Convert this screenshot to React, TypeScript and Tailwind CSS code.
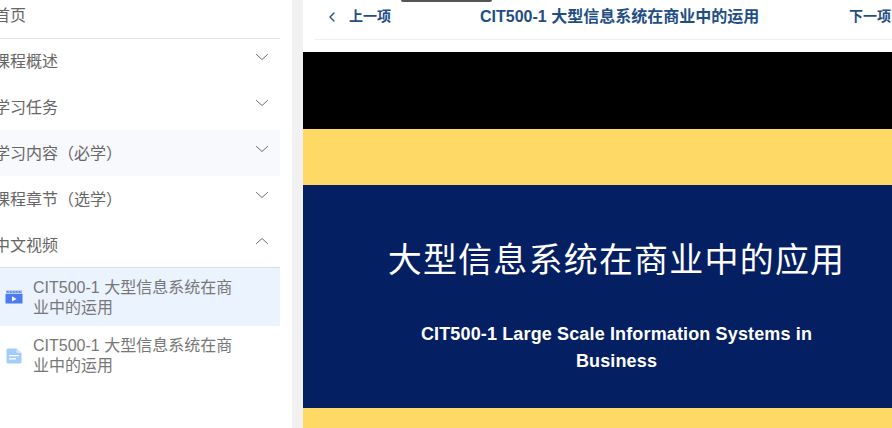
import { ChevronDown, ChevronLeft, ChevronUp } from 'lucide-react';

const FONT = "font-['Liberation_Sans','Noto_Sans_CJK_SC',sans-serif]";

const sections = [
  { title: '课程概述', open: false, hover: false },
  { title: '学习任务', open: false, hover: false },
  { title: '学习内容（必学）', open: false, hover: true },
  { title: '课程章节（选学）', open: false, hover: false },
  { title: '中文视频', open: true, hover: false },
];

const VideoIcon = () => (
  <svg width="18" height="14" viewBox="0 0 18 14" className="shrink-0">
    <path d="M1 0.5h16v3H1z" fill="#8fb0f5" />
    <path d="M2 1l1.5 2M5 1l1.5 2M8 1l1.5 2M11 1l1.5 2M14 1l1.5 2" stroke="#3f70ea" strokeWidth="0.8" />
    <rect x="0.5" y="4" width="17" height="9.5" fill="#4b7bef" />
    <path d="M7 6.2l4.5 2.7L7 11.5z" fill="#fff" />
  </svg>
);

const DocIcon = () => (
  <svg width="16" height="16" viewBox="0 0 16 16" className="shrink-0 mt-[1px]">
    <path d="M2 0.5h8.5L15.5 5v9a1.5 1.5 0 0 1-1.5 1.5H2A1.5 1.5 0 0 1 0.5 14V2A1.5 1.5 0 0 1 2 0.5z" fill="#a3cbfb" />
    <path d="M10.5 0.5L15.5 5h-5z" fill="#d3e6fd" />
    <rect x="3" y="7" width="10" height="1.3" fill="#fff" />
    <rect x="3" y="10.2" width="7" height="1.3" fill="#fff" />
  </svg>
);

const Sidebar = () => (
  <aside className="w-[280px] shrink-0 overflow-hidden text-[#666]">
    <div className="h-[39px] -mb-[1px] border-b border-[#e3e3e3] flex items-center text-[16px] leading-none pb-[7px]">
      <span className="-ml-[6px]">首页</span>
    </div>
    {sections.map((s) => (
      <div
        key={s.title}
        className={`h-[46px] flex justify-between pr-[8px] ${s.hover ? 'bg-[#f8f9fd]' : ''} ${s.open ? 'border-b border-[#dcdcdc]' : ''}`}
      >
        <span className="-ml-[6px] mt-[13px] text-[16px] leading-[22px]">{s.title}</span>
        {s.open ? (
          <ChevronUp size={20} strokeWidth={1} className="mt-[9px] text-[#555] scale-x-110" />
        ) : (
          <ChevronDown size={20} strokeWidth={1} className="mt-[9px] text-[#555] scale-x-110" />
        )}
      </div>
    ))}
    <div className="h-[58px] bg-[#ebf3fe] flex items-center pl-[5px] gap-[10px]">
      <VideoIcon />
      <span className="text-[16px] leading-[20px] w-[205px] text-[#777] mt-[2px]">CIT500-1 大型信息系统在商业中的运用</span>
    </div>
    <div className="h-[58px] flex items-center pl-[6px] gap-[11px]">
      <DocIcon />
      <span className="text-[16px] leading-[20px] w-[205px] text-[#777] mt-[2px]">CIT500-1 大型信息系统在商业中的运用</span>
    </div>
  </aside>
);

const TopBar = () => (
  <div className="relative ml-[12px] h-[40px] border-b border-[#eeeeee] flex items-center text-[14px] font-bold text-[#1f4e85] pb-[6px]">
    <ChevronLeft size={16} strokeWidth={2} className="ml-[9px]" />
    <span className="ml-[9px]">上一项</span>
    <span className="ml-[89px] text-[16px]">CIT500-1 大型信息系统在商业中的运用</span>
    <span className="ml-auto mr-[1px] whitespace-nowrap">下一项</span>
    <div className="absolute left-[86px] top-0 w-[91px] h-[2px] bg-[#555] rounded-b" />
  </div>
);

const Slide = () => (
  <div className="mt-[12px] flex-1 flex flex-col">
    <div className="h-[77px] bg-black" />
    <div className="h-[56px] bg-[#ffd966]" />
    <div className="h-[223px] bg-[#052062] flex flex-col items-center text-white pl-[38px]">
      <h1 className="mt-[51px] text-[34px] leading-[48px] tracking-[1.2px] font-normal">大型信息系统在商业中的应用</h1>
      <p className="mt-[37px] w-[420px] text-center text-[18px] leading-[27px] font-bold tracking-[0.14px]">
        CIT500-1 Large Scale Information Systems in Business
      </p>
    </div>
    <div className="flex-1 bg-[#ffd966]" />
  </div>
);

export default function App() {
  return (
    <div className={`${FONT} w-[892px] h-[428px] overflow-hidden flex bg-white`}>
      <Sidebar />
      <div className="w-[12px] shrink-0 bg-white" />
      <div className="w-[11px] shrink-0 bg-[#f1f1f1]" />
      <main className="flex-1 min-w-0 flex flex-col">
        <TopBar />
        <Slide />
      </main>
    </div>
  );
}
